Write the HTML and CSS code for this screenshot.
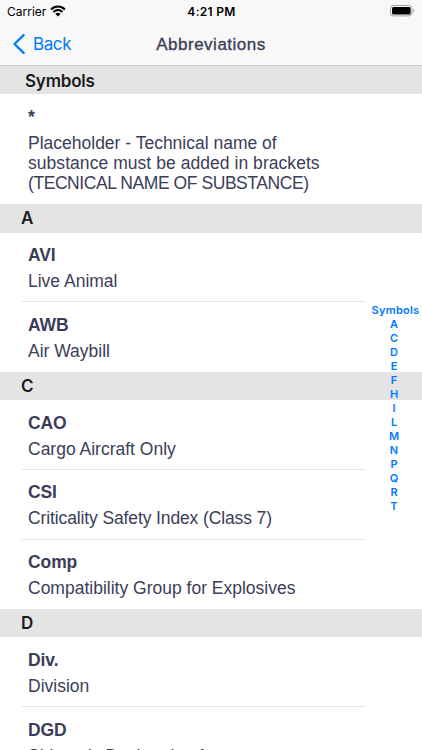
FILE: index.html
```html
<!DOCTYPE html>
<html lang="en">
<head>
    <meta charset="UTF-8">
    <meta name="viewport" content="width=device-width, initial-scale=1.0">
    <title>Abbreviations</title>
    <link rel="stylesheet" href="styles.css">
</head>
<body>
    <!-- Status bar and navigation -->
    <header class="topbar">
        <div class="status">
            <div class="carrier">
                <span class="carrier-name">Carrier</span>
                <svg class="wifi" width="16" height="12" viewBox="0 0 16 12">
                    <path d="M1.1 4.4a9.8 9.8 0 0 1 13.8 0M3.5 6.9a6.4 6.4 0 0 1 9 0" fill="none" stroke="#000" stroke-width="2.1"/>
                    <path d="M8 11.6 5.4 9a3.7 3.7 0 0 1 5.2 0z"/>
                </svg>
            </div>
            <span class="time">4:21 PM</span>
            <svg class="battery" width="26" height="12" viewBox="0 0 26 12">
                <rect x="0.5" y="0.5" width="21.4" height="10.4" rx="3" fill="none" stroke="#a3a3a3"/>
                <rect x="2" y="2" width="18.6" height="7.6" rx="1.5"/>
                <path d="M23.1 4v3.6c1.6-.6 1.6-3 0-3.6z" fill="#a3a3a3"/>
            </svg>
        </div>
        <nav class="nav">
            <a class="back" href="#">
                <svg width="12" height="20" viewBox="0 0 12 20">
                    <path d="M10.6 1.1 1.5 10l9.1 8.9" fill="none" stroke="#007aff" stroke-width="2.3" stroke-linecap="round" stroke-linejoin="round"/>
                </svg>
                <span>Back</span>
            </a>
            <h1 class="title">Abbreviations</h1>
        </nav>
    </header>

    <!-- Abbreviations grouped by letter -->
    <main class="list">
        <h2 class="section symbols">Symbols</h2>
        <div class="item first">
            <h3>*</h3>
            <p>Placeholder - Technical name of<br><span class="wide">substance must be added in brackets</span><br><span class="caps">(TECNICAL NAME OF SUBSTANCE)</span></p>
        </div>

        <h2 class="section">A</h2>
        <div class="item">
            <h3>AVI</h3>
            <p>Live Animal</p>
        </div>
        <div class="item">
            <h3>AWB</h3>
            <p>Air Waybill</p>
        </div>

        <h2 class="section">C</h2>
        <div class="item">
            <h3>CAO</h3>
            <p>Cargo Aircraft Only</p>
        </div>
        <div class="item">
            <h3>CSI</h3>
            <p class="narrow">Criticality Safety Index (Class 7)</p>
        </div>
        <div class="item">
            <h3>Comp</h3>
            <p>Compatibility Group for Explosives</p>
        </div>

        <h2 class="section">D</h2>
        <div class="item">
            <h3>Div.</h3>
            <p>Division</p>
        </div>
        <div class="item">
            <h3>DGD</h3>
            <p>Shipper's Declaration for</p>
        </div>
    </main>

    <!-- Index floating over the list -->
    <aside class="index">
        <span class="index-symbols">Symbols</span>
        <span>A</span>
        <span>C</span>
        <span>D</span>
        <span>E</span>
        <span>F</span>
        <span>H</span>
        <span>I</span>
        <span>L</span>
        <span>M</span>
        <span>N</span>
        <span>P</span>
        <span>Q</span>
        <span>R</span>
        <span>T</span>
    </aside>
</body>
</html>
```
FILE: styles.css
```css
* {
    box-sizing: border-box;
}

body {
    margin: 0;
    height: 750px;
    overflow: hidden;
    position: relative;
    background-color: #ffffff;
    color: #3b3e58;
    font-family: "Liberation Sans", Arial, sans-serif;
}

h1, h2, h3, p {
    margin: 0;
}

/* Top bar */
.topbar {
    height: 66px;
    background-color: #f8f8f8;
    border-bottom: 1px solid #cfcfcf;
}

.status {
    display: grid;
    grid-template-columns: 1fr auto 1fr;
    align-items: center;
    height: 22px;
    padding: 0 6px 0 7px;
    color: #000000;
    font-family: Inter, sans-serif;
    font-size: 12px;
}

.carrier {
    display: flex;
    align-items: center;
    gap: 4px;
}

.time {
    font-weight: 600;
    letter-spacing: 0.3px;
}

.battery {
    justify-self: end;
}

.nav {
    display: grid;
    grid-template-columns: 1fr auto 1fr;
    align-items: center;
    height: 43px;
    padding: 0 13px;
}

.back {
    display: flex;
    align-items: center;
    gap: 8px;
    color: #007aff;
    font-family: Inter, sans-serif;
    font-size: 17px;
    letter-spacing: -0.4px;
    text-decoration: none;
}

.title {
    padding-top: 2px;
    font-size: 17px;
    font-weight: 400;
    letter-spacing: 0.5px;
    -webkit-text-stroke: 0.35px #3b3e58;
}

/* List */
.section {
    height: 28.3px;
    padding-left: 21px;
    background-color: #e4e4e4;
    color: #1c1c1e;
    font-family: Inter, sans-serif;
    font-size: 17px;
    font-weight: 600;
    line-height: 29px;
    letter-spacing: -0.2px;
}

.symbols {
    padding-left: 25px;
    line-height: 30px;
}

.item {
    height: 69.67px;
    padding: 12.4px 0 0 28px;
    font-size: 17.5px;
    line-height: 20px;
}

.item h3 {
    margin-bottom: 6px;
    font-size: 17.5px;
    font-weight: 700;
    letter-spacing: -0.1px;
}

.item.first {
    height: 110px;
}

.wide {
    letter-spacing: 0.05px;
}

.narrow {
    letter-spacing: -0.12px;
}

.caps {
    letter-spacing: -0.43px;
}

.item:has(+ .item) {
    background: linear-gradient(#e6e6e8, #e6e6e8) 21px 100% / 345px 1px no-repeat;
}

/* Letter index */
.index {
    position: absolute;
    top: 303px;
    right: 0;
    width: 56px;
    display: flex;
    flex-direction: column;
    align-items: center;
    color: #007aff;
    font-family: Inter, sans-serif;
    font-size: 11px;
    font-weight: 600;
    line-height: 14.03px;
}

.index-symbols {
    padding-left: 3px;
    letter-spacing: 0.25px;
}
```
